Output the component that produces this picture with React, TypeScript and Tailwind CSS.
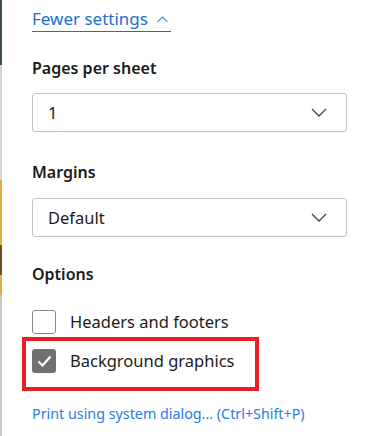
import React from "react";

function Chevron() {
  return (
    <svg width="16" height="9" viewBox="0 0 16 9" fill="none" stroke="#444" strokeWidth="1.3">
      <path d="M1 1l7 7 7-7" />
    </svg>
  );
}

function SelectBox({ value }: { value: string }) {
  return (
    <div className="flex h-[39px] items-center justify-between rounded-[3px] border border-[#c4c4c4] bg-white pl-[15px] pr-[19px]">
      <span className="text-[16.5px] leading-[22px] text-[#1b1b1b]">{value}</span>
      <Chevron />
    </div>
  );
}

function Checkbox({ checked, label }: { checked?: boolean; label: string }) {
  return (
    <div className="flex h-[24px] items-center gap-[14px]">
      {checked ? (
        <div className="flex h-[24px] w-[24px] items-center justify-center rounded-[3px] bg-[#707070]">
          <svg width="15" height="12" viewBox="0 0 15 12" fill="none" stroke="#fff" strokeWidth="2.2">
            <path d="M1.5 6.5l4 4 8-9" />
          </svg>
        </div>
      ) : (
        <div className="h-[24px] w-[24px] rounded-[3px] border border-[#8a8a8a] bg-white" />
      )}
      <span className="text-[16.5px] leading-[22px] text-[#1b1b1b]">{label}</span>
    </div>
  );
}

export default function App() {
  return (
    <div
      className="relative flex h-[436px] w-[373px] bg-white"
      style={{ fontFamily: '"Noto Sans", sans-serif' }}
    >
      <div className="flex w-[2px] flex-col">
        <div className="h-[65px] bg-[#3d4f48]" />
        <div className="h-[115px] bg-[#d4d4d0]" />
        <div className="h-[65px] bg-[#e0b040]" />
        <div className="h-[30px] bg-[#6a5020]" />
        <div className="h-[20px] bg-[#e0b040]" />
        <div className="flex-1 bg-[#c8c8c4]" />
      </div>
      <div className="flex flex-1 flex-col pl-[30px] pr-[26px]">
        <div className="flex pt-[8px]">
          <span className="inline-flex items-center gap-[9px] border-b border-[#1a6fd6] pb-[1px] pr-[3px] text-[17px] leading-[22px] text-[#1a6fd6]">
            Fewer settings
            <svg width="11" height="7" viewBox="0 0 11 7" fill="none" stroke="#5a9be6" strokeWidth="1.3">
              <path d="M0.5 6l5-5 5 5" />
            </svg>
          </span>
        </div>
        <div className="mt-[25px] text-[16px] font-semibold leading-[22px] text-[#1b1b1b]">Pages per sheet</div>
        <div className="mt-[14px]">
          <SelectBox value="1" />
        </div>
        <div className="mt-[29px] text-[16px] font-semibold leading-[22px] text-[#1b1b1b]">Margins</div>
        <div className="mt-[15px]">
          <SelectBox value="Default" />
        </div>
        <div className="mt-[26px] text-[16px] font-semibold leading-[22px] text-[#1b1b1b]">Options</div>
        <div className="mt-[25px] flex flex-col gap-[15px]">
          <Checkbox label="Headers and footers" />
          <Checkbox checked label="Background graphics" />
        </div>
        <div className="mt-[31px] text-[14.3px] leading-[20px] text-[#2a7be4]">Print using system dialog... (Ctrl+Shift+P)</div>
      </div>
      <div className="absolute left-[22px] top-[337px] h-[54px] w-[237px] border-[4px] border-[#e8202a]" />
    </div>
  );
}
